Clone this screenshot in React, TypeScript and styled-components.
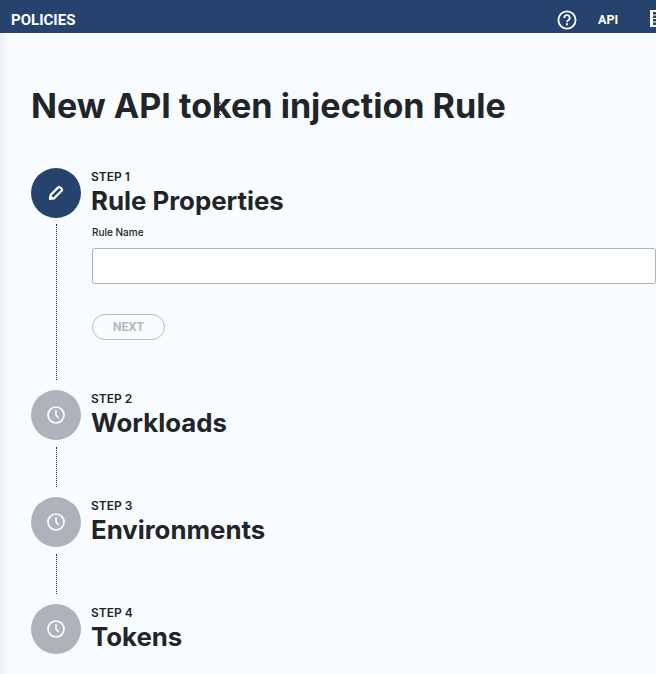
import styled, { createGlobalStyle } from "styled-components";

const GlobalStyle = createGlobalStyle`
  html, body {
    margin: 0;
    padding: 0;
    background: #f8fcff;
  }
  body {
    font-family: Inter, "Liberation Sans", sans-serif;
    overflow: hidden;
  }
`;

const Page = styled.div`
  width: 656px;
  height: 674px;
  overflow: hidden;
  display: flex;
  flex-direction: column;
`;

const Header = styled.header`
  box-sizing: border-box;
  height: 33px;
  flex: none;
  background: #26436d;
  color: #fff;
  display: flex;
  align-items: center;
  padding: 6px 0 0 11px;
  font-family: Roboto, sans-serif;
  font-weight: 700;
`;

const HeaderTitle = styled.div`
  font-size: 15px;
  flex: none;
  width: 546px;
`;

const HeaderActions = styled.div`
  display: flex;
  flex: none;
  align-items: center;
`;

const ApiLink = styled.span`
  font-size: 12.5px;
  margin-left: 21px;
  margin-right: 32px;
`;

const TableIconWrap = styled.span`
  display: flex;
  margin-top: -3px;
`;

const Main = styled.main`
  flex: 1;
  position: relative;
  padding: 52px 0 0 31px;
  background: linear-gradient(to right, #eef1f4 0, #f8fcff 9px);
`;

const Title = styled.h1`
  margin: 0 0 42px;
  font-size: 34.1px;
  line-height: 41px;
  font-weight: 700;
  color: #212529;
  white-space: nowrap;
`;

const Step = styled.section`
  display: grid;
  grid-template-columns: 50px 1fr;
  column-gap: 10px;
`;

const Circle = styled.div<{ $active?: boolean }>`
  width: 50px;
  height: 50px;
  border-radius: 50%;
  background: ${(p) => (p.$active ? "#26436d" : "#aeb3bb")};
  display: flex;
  align-items: center;
  justify-content: center;
`;

const StepHeading = styled.div`
  padding-top: 2px;
  color: #212529;
`;

const StepLabel = styled.div`
  font-size: 12px;
  line-height: 14px;
  font-weight: 600;
`;

const StepName = styled.div`
  font-size: 25.8px;
  line-height: 34px;
  font-weight: 700;
  white-space: nowrap;
`;

const Rail = styled.div<{ $height: number; $top: number; $bottom: number }>`
  width: 25px;
  height: ${(p) => p.$height}px;
  margin: ${(p) => p.$top}px 0 ${(p) => p.$bottom}px;
  border-right: 1px dotted #212529;
`;

const StepBody = styled.div`
  padding: 8px 0 0 1px;
`;

const FieldLabel = styled.label`
  display: block;
  font-size: 10px;
  line-height: 12px;
  font-weight: 500;
  color: #212529;
  margin-bottom: 10px;
`;

const TextInput = styled.input`
  display: block;
  box-sizing: border-box;
  width: 564px;
  height: 36px;
  background: #fff;
  border: 1px solid #aeb3bb;
  border-radius: 3px;
  padding: 0 10px;
  outline: none;
`;

const NextButton = styled.button`
  display: block;
  box-sizing: border-box;
  width: 73px;
  height: 26px;
  margin-top: 30px;
  padding: 0 0 2px;
  border: 1px solid #b9bdc4;
  border-radius: 13px;
  background: transparent;
  color: #b5b9c1;
  font-family: Roboto, sans-serif;
  font-size: 12.5px;
  font-weight: 700;
`;

const Cursor = styled.svg`
  position: absolute;
  left: 216px;
  top: 64px;
`;

function HelpIcon() {
  return (
    <svg width="20" height="20" viewBox="0 0 20 20" fill="none">
      <circle cx="10" cy="10" r="8.6" stroke="#fff" strokeWidth="1.8" />
      <path d="M7.3 7.9a2.7 2.7 0 1 1 4 2.3c-.9.5-1.3 1-1.3 2" stroke="#fff" strokeWidth="1.8" />
      <rect x="9" y="13.3" width="2" height="2" fill="#fff" />
    </svg>
  );
}

function TableIcon() {
  return (
    <svg width="16" height="17" viewBox="0 0 16 17" fill="none">
      <rect width="16" height="17" fill="#fff" />
      <path d="M3 2h3v2.5H3zM3 5.5h3V8H3zM3 9h3v2.5H3zM3 12.5h3V15H3z" fill="#26436d" />
    </svg>
  );
}

function PencilIcon() {
  return (
    <svg width="16" height="16" viewBox="0 0 16 16" fill="none">
      <path
        d="M10.2 2.4a1.4 1.4 0 0 1 2 0l1.4 1.4a1.4 1.4 0 0 1 0 2L6 13.4l-4 .6.6-4z"
        stroke="#fff"
        strokeWidth="2.2"
        strokeLinejoin="round"
        fill="#26436d"
      />
      <path d="M1.8 14.2l.8-4.2 3.4 3.4z" fill="#fff" />
    </svg>
  );
}

function ClockIcon() {
  return (
    <svg width="20" height="20" viewBox="0 0 20 20" fill="none">
      <circle cx="10" cy="10" r="8" stroke="#fff" strokeWidth="1.7" />
      <path d="M10 5v5l2.6 3" stroke="#fff" strokeWidth="1.5" />
    </svg>
  );
}

export default function App() {
  return (
    <Page>
      <GlobalStyle />
      <Header>
        <HeaderTitle>POLICIES</HeaderTitle>
        <HeaderActions>
          <HelpIcon />
          <ApiLink>API</ApiLink>
          <TableIconWrap>
            <TableIcon />
          </TableIconWrap>
        </HeaderActions>
      </Header>
      <Main>
        <Title>New API token injection Rule</Title>
        <Cursor width="8" height="20" viewBox="0 0 8 20">
          <path d="M3 6h2M3 16l2 2" stroke="#212529" strokeWidth="1" fill="none" />
        </Cursor>

        <Step>
          <Circle $active>
            <PencilIcon />
          </Circle>
          <StepHeading>
            <StepLabel>STEP 1</StepLabel>
            <StepName>Rule Properties</StepName>
          </StepHeading>
          <Rail $top={6} $bottom={10} $height={156} />
          <StepBody>
            <FieldLabel>Rule Name</FieldLabel>
            <TextInput />
            <NextButton>NEXT</NextButton>
          </StepBody>
        </Step>

        <Step>
          <Circle>
            <ClockIcon />
          </Circle>
          <StepHeading>
            <StepLabel>STEP 2</StepLabel>
            <StepName>Workloads</StepName>
          </StepHeading>
          <Rail $top={7} $bottom={10} $height={40} />
        </Step>

        <Step>
          <Circle>
            <ClockIcon />
          </Circle>
          <StepHeading>
            <StepLabel>STEP 3</StepLabel>
            <StepName>Environments</StepName>
          </StepHeading>
          <Rail $top={7} $bottom={10} $height={40} />
        </Step>

        <Step>
          <Circle>
            <ClockIcon />
          </Circle>
          <StepHeading>
            <StepLabel>STEP 4</StepLabel>
            <StepName>Tokens</StepName>
          </StepHeading>
        </Step>
      </Main>
    </Page>
  );
}
